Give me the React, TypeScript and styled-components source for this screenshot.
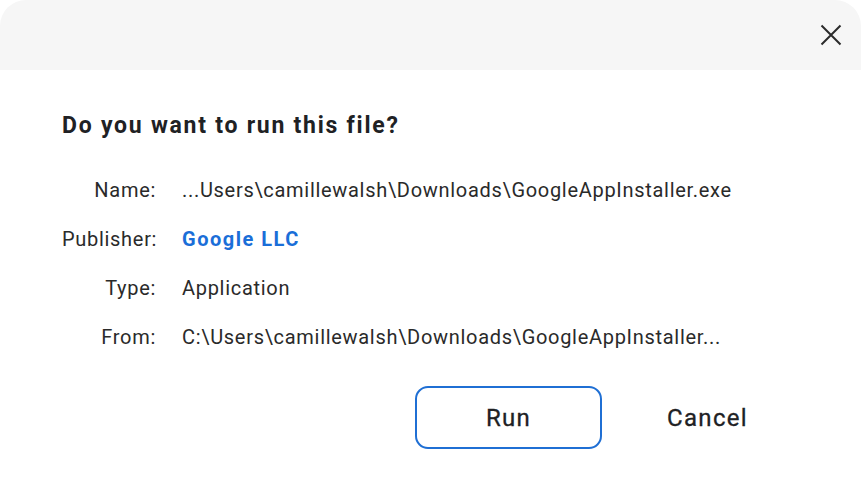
import React from 'react';
import styled, { createGlobalStyle } from 'styled-components';

const GlobalStyle = createGlobalStyle`
  html, body {
    margin: 0;
    padding: 0;
    background: #ffffff;
  }
  body {
    font-family: Roboto, 'Noto Sans', Arial, sans-serif;
    color: #202124;
  }
`;

const Dialog = styled.div`
  width: 861px;
  height: 490px;
  background: #ffffff;
  display: flex;
  flex-direction: column;
`;

const Header = styled.div`
  height: 70px;
  background: #f6f6f6;
  border-radius: 26px 26px 0 0;
  display: flex;
  justify-content: flex-end;
  align-items: flex-start;
  padding: 24px 19px 0 0;
  box-sizing: border-box;
`;

const CloseButton = styled.button`
  width: 22px;
  height: 22px;
  padding: 0;
  border: none;
  background: transparent;
  display: flex;
  align-items: center;
  justify-content: center;
  cursor: pointer;
`;

const Body = styled.div`
  padding: 42px 60px 0 62px;
  display: flex;
  flex-direction: column;
`;

const Title = styled.h1`
  margin: 0;
  font-size: 23px;
  line-height: 28px;
  font-weight: 700;
  letter-spacing: 1.75px;
  color: #202124;
`;

const InfoGrid = styled.div`
  display: grid;
  grid-template-columns: 94px 1fr;
  column-gap: 26px;
  grid-auto-rows: 49px;
  align-items: center;
  margin-top: 25px;
  font-size: 20px;
  letter-spacing: 0.7px;
`;

const Label = styled.div`
  text-align: right;
  white-space: nowrap;
  color: #2a2a2a;
`;

const Value = styled.div<{ $link?: boolean }>`
  white-space: nowrap;
  color: ${p => (p.$link ? '#1a6ed8' : '#2a2a2a')};
  font-weight: ${p => (p.$link ? 700 : 400)};
  letter-spacing: ${p => (p.$link ? '1.5px' : '0.7px')};
`;

const Actions = styled.div`
  display: flex;
  justify-content: flex-end;
  gap: 12px;
  margin-top: 25px;
`;

const ActionButton = styled.button<{ $primary?: boolean }>`
  width: 187px;
  height: 63px;
  box-sizing: border-box;
  border: 2.5px solid ${p => (p.$primary ? '#1f6fd4' : 'transparent')};
  border-radius: 13px;
  background: #ffffff;
  font-family: inherit;
  font-size: 24px;
  font-weight: 400;
  letter-spacing: 1.3px;
  color: #202124;
  -webkit-text-stroke: 0.3px #202124;
  cursor: pointer;
`;

const rows: { label: string; value: string; link?: boolean }[] = [
  { label: 'Name:', value: '...Users\\camillewalsh\\Downloads\\GoogleAppInstaller.exe' },
  { label: 'Publisher:', value: 'Google LLC', link: true },
  { label: 'Type:', value: 'Application' },
  { label: 'From:', value: 'C:\\Users\\camillewalsh\\Downloads\\GoogleAppInstaller...' },
];

const App: React.FC = () => {
  return (
    <>
      <GlobalStyle />
      <Dialog>
        <Header>
          <CloseButton aria-label="Close">
            <svg width="22" height="22" viewBox="0 0 22 22">
              <path d="M1.5 1.5 L20.5 20.5 M20.5 1.5 L1.5 20.5" stroke="#2b2b2b" strokeWidth="2" />
            </svg>
          </CloseButton>
        </Header>
        <Body>
          <Title>Do you want to run this file?</Title>
          <InfoGrid>
            {rows.map(r => (
              <React.Fragment key={r.label}>
                <Label>{r.label}</Label>
                <Value $link={r.link}>{r.value}</Value>
              </React.Fragment>
            ))}
          </InfoGrid>
          <Actions>
            <ActionButton $primary>Run</ActionButton>
            <ActionButton>Cancel</ActionButton>
          </Actions>
        </Body>
      </Dialog>
    </>
  );
};

export default App;
